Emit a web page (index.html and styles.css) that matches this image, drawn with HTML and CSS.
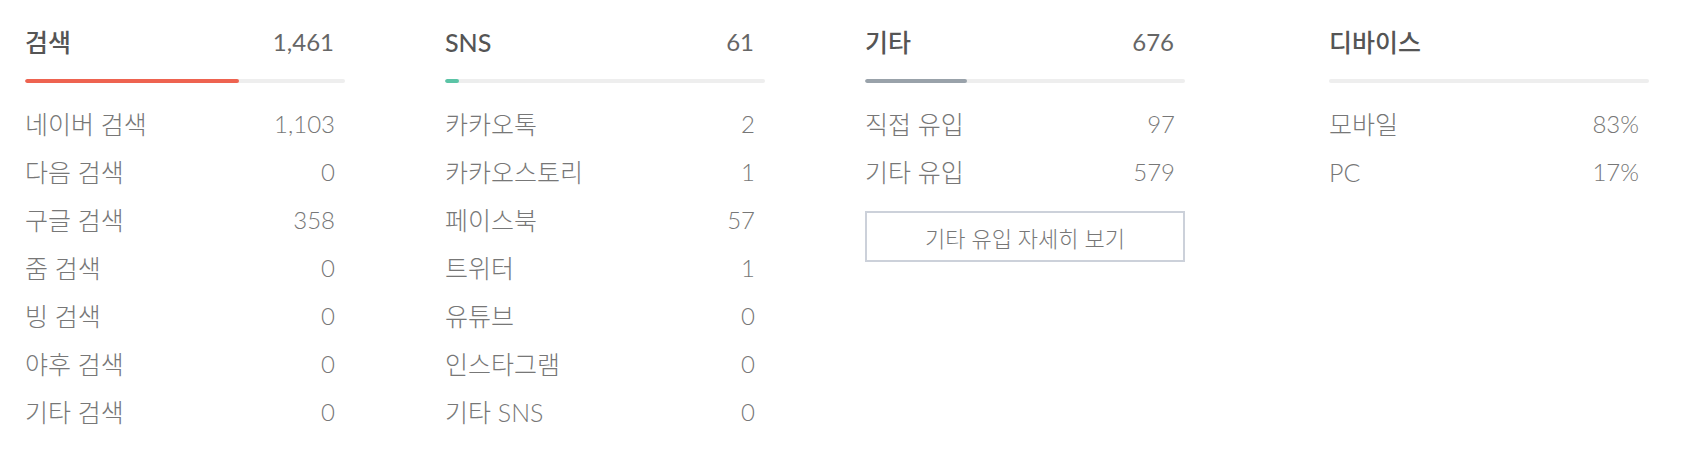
FILE: index.html
```html
<!DOCTYPE html>
<html lang="ko">
<head>
<meta charset="utf-8">
<title>유입 경로</title>
<link rel="stylesheet" href="styles.css">
</head>
<body>
<div class="stats">
  <section class="col">
    <div class="head"><span class="label">검색</span><span class="num">1,461</span></div>
    <div class="track"><div class="fill fill-red" style="width:67%"></div></div>
    <ul class="rows">
      <li><span class="name">네이버 검색</span><span class="num">1,103</span></li>
      <li><span class="name">다음 검색</span><span class="num">0</span></li>
      <li><span class="name">구글 검색</span><span class="num">358</span></li>
      <li><span class="name">줌 검색</span><span class="num">0</span></li>
      <li><span class="name">빙 검색</span><span class="num">0</span></li>
      <li><span class="name">야후 검색</span><span class="num">0</span></li>
      <li><span class="name">기타 검색</span><span class="num">0</span></li>
    </ul>
  </section>
  <section class="col">
    <div class="head"><span class="label">SNS</span><span class="num">61</span></div>
    <div class="track"><div class="fill fill-teal" style="width:4.4%"></div></div>
    <ul class="rows">
      <li><span class="name">카카오톡</span><span class="num">2</span></li>
      <li><span class="name">카카오스토리</span><span class="num">1</span></li>
      <li><span class="name">페이스북</span><span class="num">57</span></li>
      <li><span class="name">트위터</span><span class="num">1</span></li>
      <li><span class="name">유튜브</span><span class="num">0</span></li>
      <li><span class="name">인스타그램</span><span class="num">0</span></li>
      <li><span class="name">기타 SNS</span><span class="num">0</span></li>
    </ul>
  </section>
  <section class="col">
    <div class="head"><span class="label">기타</span><span class="num">676</span></div>
    <div class="track"><div class="fill fill-grey" style="width:32%"></div></div>
    <ul class="rows">
      <li><span class="name">직접 유입</span><span class="num">97</span></li>
      <li><span class="name">기타 유입</span><span class="num">579</span></li>
    </ul>
    <button class="more" type="button">기타 유입 자세히 보기</button>
  </section>
  <section class="col col-device">
    <div class="head"><span class="label">디바이스</span></div>
    <div class="track"></div>
    <ul class="rows">
      <li><span class="name">모바일</span><span class="num">83%</span></li>
      <li><span class="name">PC</span><span class="num">17%</span></li>
    </ul>
  </section>
</div>
</body>
</html>
```
FILE: styles.css
```css
* { box-sizing: border-box; }

html, body {
  margin: 0;
  background: #ffffff;
}

body {
  font-family: Lato, "Noto Sans CJK KR", sans-serif;
  color: #777777;
}

.stats {
  display: flex;
  gap: 100px;
  padding: 18px 0 0 25px;
}

.col {
  width: 320px;
  flex: none;
}

.col-device {
  margin-left: 44px;
}

.head {
  display: flex;
  justify-content: space-between;
  align-items: center;
  height: 48px;
  padding-right: 11px;
  line-height: 48px;
}

.head .label {
  font-size: 25px;
  color: #555555;
  font-weight: 500;
}

.head .num {
  font-size: 24px;
  color: #666666;
}

.track {
  margin-top: 13px;
  height: 4px;
  border-radius: 2px;
  background: #eeeeee;
  overflow: hidden;
}

.fill {
  height: 100%;
  border-radius: 2px;
}

.fill-red { background: #ee6350; }
.fill-teal { background: #5bc4a6; }
.fill-grey { background: #99a2aa; }

.rows {
  list-style: none;
  margin: 17px 0 0;
  padding: 0;
}

.rows li {
  display: flex;
  justify-content: space-between;
  align-items: center;
  height: 48px;
  line-height: 48px;
  padding-right: 10px;
  color: #777777;
}

.rows .name {
  font-size: 25px;
  font-weight: 300;
}

.rows .num {
  font-size: 24px;
  font-weight: 300;
}

.more {
  display: block;
  width: 320px;
  height: 51px;
  margin-top: 15px;
  border: 2px solid #ccd1da;
  background: #ffffff;
  font-family: Lato, "Noto Sans CJK KR", sans-serif;
  font-size: 22px;
  font-weight: 300;
  color: #777777;
  cursor: pointer;
}
```
